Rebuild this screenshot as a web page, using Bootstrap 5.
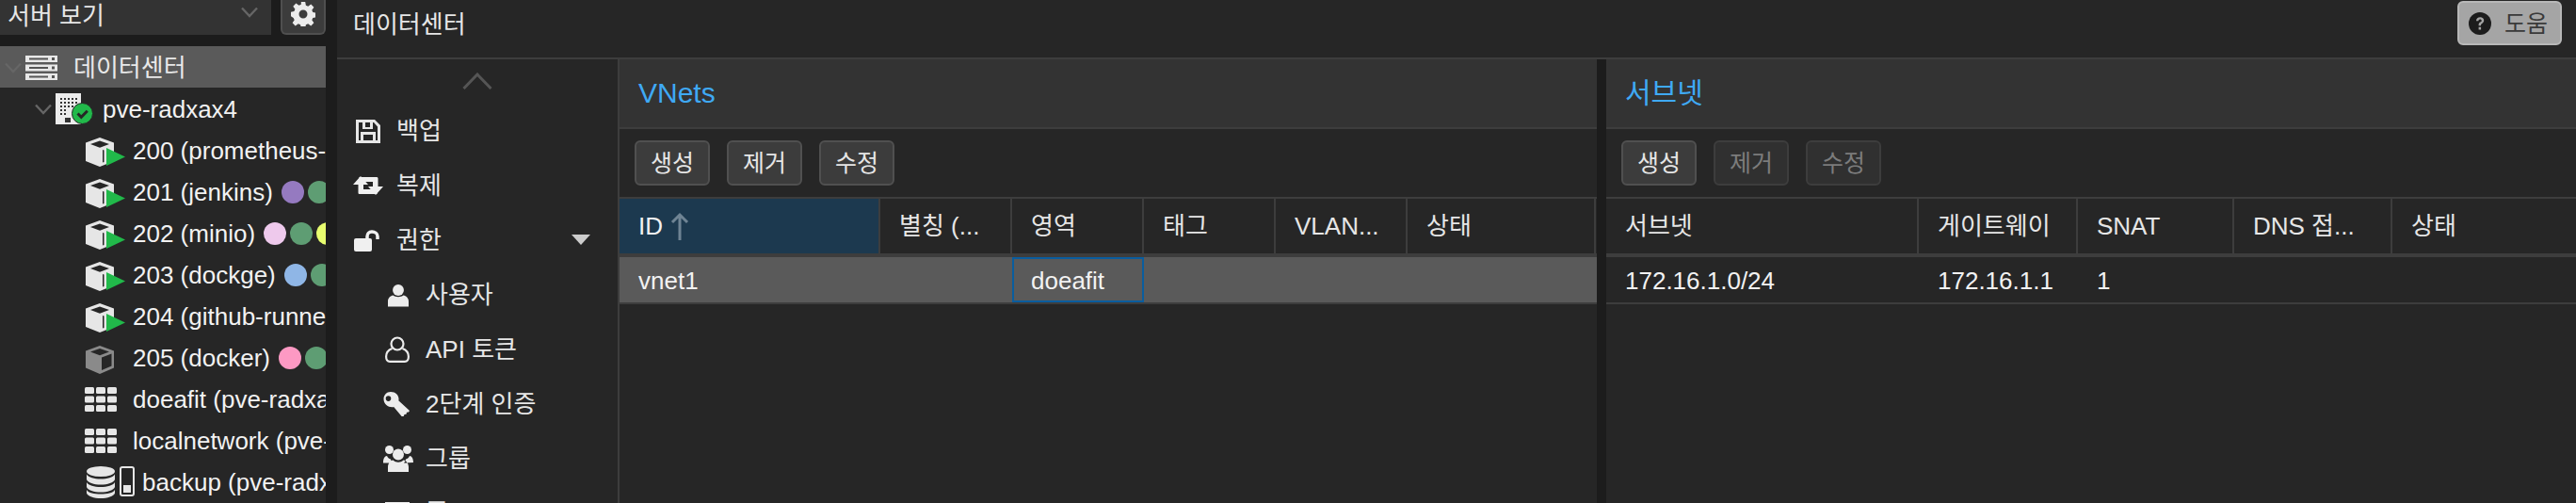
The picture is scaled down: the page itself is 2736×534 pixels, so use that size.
<!DOCTYPE html>
<html lang="ko">
<head>
    <meta charset="UTF-8">
    <title>데이터센터</title>
    <link href="https://cdn.jsdelivr.net/npm/bootstrap@5.3.3/dist/css/bootstrap.min.css" rel="stylesheet">
    <style>
        html, body { height: 534px; overflow: hidden; }
        body {
            background: #1c1c1c;
            color: #f2f2f2;
            font-family: "Liberation Sans", "Noto Sans CJK KR", sans-serif;
            font-size: 26px;
            line-height: 30px;
        }
        svg { flex: none; display: block; }
        .no-min { min-width: 0; min-height: 0; }

        .side-col { width: 346px; margin-right: 12px; flex: none; }
        .view-top { height: 37px; gap: 10px; margin-bottom: 12px; flex: none; }
        .view-select { width: 289px; background: #333; padding: 0 14px 4px 8px; color: #e6e6e6; }
        .gear-btn { width: 48px; background: #3c3c3c; border: 2px solid #4f4f4f; border-top: 0; border-radius: 0 0 6px 6px; padding-bottom: 6px; }
        .tree-box { background: #262626; flex: 1; }
        .tree-row { height: 44px; padding-top: 2px; white-space: nowrap; overflow: hidden; }
        .tree-row.picked { background: #5a5a5a; color: #e8e8e8; }
        .lvl-0 { padding-left: 5px; }
        .lvl-1 { padding-left: 37px; }
        .lvl-2 { padding-left: 90px; }
        .tree-ico { width: 51px; flex: none; }
        .tree-ico .cube-ico { margin-top: 3px; }
        .lvl-0 .tree-ico { margin-left: 4px; }
        .lvl-1 .tree-ico { width: 50px; margin-left: 4px; }
        .db-ico { margin-right: 8px; margin-left: 2px; }
        .tag-dot { width: 24px; height: 24px; border-radius: 50%; flex: none; margin-left: 4px; }
        .tag-first { margin-left: 9px; }
        .dot-purple { background: #957ac0; }
        .dot-green { background: #5e9d73; }
        .dot-lilac { background: #eec9ec; }
        .dot-yellow { background: #e8fd6f; }
        .dot-blue { background: #8fb6e6; }
        .dot-rose { background: #fd99c3; }

        .top-bar { height: 63px; background: #262626; border-bottom: 2px solid #3d3d3d; padding: 0 15px 0 17px; flex: none; }
        .top-title { color: #e6e6e6; padding-bottom: 10px; }
        .help-btn { width: 111px; height: 47px; margin-bottom: 12px; background: #a5a5a5; border: 2px solid #b8b8b8; border-radius: 6px; color: #3a3a3a; font-size: 25px; padding-left: 10px; gap: 14px; }

        .menu-col { width: 300px; background: #262626; border-right: 2px solid #3d3d3d; flex: none; }
        .menu-up { height: 46px; padding-top: 14px; }
        .menu-row { height: 58px; padding-left: 20px; padding-top: 2px; color: #e6e6e6; flex: none; position: relative; }
        .menu-ico { width: 43px; flex: none; }
        .menu-sub { padding-left: 47px; }
        .menu-sub .menu-ico { width: 47px; }
        .nudge-n3 { margin-left: -3px; }
        .nudge-n2 { margin-left: -2px; }
        .nudge-2 { margin-left: 2px; }
        .nudge-4 { margin-left: 4px; }
        .nudge-7 { margin-left: 7px; }
        .menu-caret { position: absolute; left: 249px; top: 24px; width: 0; height: 0; border: 10px solid transparent; border-top: 11px solid #ccc; border-bottom: 0; }

        .grid-panel { background: #262626; }
        .panel-vnet { width: 1038px; flex: none; }
        .panel-split { width: 10px; flex: none; background: #1c1c1c; }
        .panel-sub { flex: 1; min-width: 0; }
        .panel-head { height: 74px; background: #333; border-bottom: 2px solid #3d3d3d; padding: 0 20px; color: #3fa9f5; font-size: 30px; }
        .panel-tools { height: 74px; border-bottom: 2px solid #3d3d3d; padding-left: 16px; gap: 18px; }
        .tool-btn { width: 80px; height: 48px; padding: 0; background: #3c3c3c; border: 2px solid #505050; border-radius: 6px; color: #e6e6e6; font-size: 25px; line-height: 1; }
        .tool-btn:disabled { background: #303030; border-color: #3d3d3d; color: #7c7c7c; opacity: 1; }
        .head-row { height: 62px; border-bottom: 4px solid #3d3d3d; }
        .head-cell { height: 58px; padding: 0 20px; border-right: 2px solid #3d3d3d; flex: none; white-space: nowrap; overflow: hidden; color: #e6e6e6; }
        .head-cell.sorted { background: #1c394f; color: #f2f2f2; }
        .head-cell.plain { border-right: 0; }
        .data-row { height: 50px; border-bottom: 2px solid #3d3d3d; }
        .data-row.picked { background: #5a5a5a; }
        .data-cell { height: 48px; padding: 2px 20px 0; flex: none; white-space: nowrap; }
        .data-cell.focused { border: 2px solid #0a5d9e; padding: 2px 18px 0; }
        .w-277 { width: 277px; }
        .w-140 { width: 140px; }
        .w-200 { width: 200px; }
        .w-332 { width: 332px; }
        .w-169 { width: 169px; }
        .w-166 { width: 166px; }
        .w-168 { width: 168px; }
    </style>
</head>
<body class="d-flex">

<svg class="d-none">
    <symbol id="chev" viewBox="0 0 18 12"><path d="M1 1.500 9 10l8-8.500" fill="none" stroke="#666" stroke-width="2.400"/></symbol>
    <symbol id="cube" viewBox="0 0 43 31">
        <path fill="#e6e6e6" fill-rule="evenodd" d="M16 0 31 5.500V25L16 31 1 25V5.500ZM16 3.500 6 7l10 3.800L26 7ZM19 13v13.500l1.500-.6V13.500Z"/>
        <path fill="#21b94a" d="M23 11 43 20.500 23 30Z"/>
    </symbol>
    <symbol id="cube-off" viewBox="0 0 32 31">
        <path fill="#8a8a8a" d="M16 1 31 6.500V24.500L16 31 1 24.500V6.500Z"/>
        <path fill="#262626" d="M16 4 6 7.500l10 3.800 10-3.800ZM18 13.500V27l10.500-4.500V9.500Z"/>
    </symbol>
    <symbol id="grid" viewBox="0 0 34 26">
        <g fill="#e6e6e6">
            <rect width="10" height="7" rx="1.500"/><rect x="12" width="10" height="7" rx="1.500"/><rect x="24" width="10" height="7" rx="1.500"/>
            <rect y="9.500" width="10" height="7" rx="1.500"/><rect x="12" y="9.500" width="10" height="7" rx="1.500"/><rect x="24" y="9.500" width="10" height="7" rx="1.500"/>
            <rect y="19" width="10" height="7" rx="1.500"/><rect x="12" y="19" width="10" height="7" rx="1.500"/><rect x="24" y="19" width="10" height="7" rx="1.500"/>
        </g>
    </symbol>
</svg>

<aside class="side-col d-flex flex-column">
    <div class="view-top d-flex">
        <div class="view-select d-flex align-items-center justify-content-between">
            <span>서버 보기</span>
            <svg width="18" height="12" class="mb-2"><use href="#chev"/></svg>
        </div>
        <div class="gear-btn d-flex align-items-center justify-content-center">
            <svg width="26" height="26" viewBox="0 0 26 26"><path fill="#ececec" fill-rule="evenodd" d="M10.800 0h4.400l.7 3.700 2.300 1 3.100-2.100 3.100 3.100-2.100 3.100 1 2.300 3.700.7v4.400l-3.700.7-1 2.300 2.100 3.100-3.100 3.100-3.100-2.100-2.300 1-.7 3.700h-4.400l-.7-3.700-2.300-1-3.100 2.100-3.100-3.100 2.100-3.100-1-2.300L-.3 15.200v-4.400l3.700-.7 1-2.300-2.100-3.100 3.100-3.100 3.100 2.100 2.300-1ZM13 8.500a4.500 4.500 0 1 0 0 9 4.500 4.500 0 0 0 0-9Z"/></svg>
        </div>
    </div>
    <div class="tree-box">
        <div class="tree-row picked lvl-0 d-flex align-items-center">
            <svg width="18" height="12"><use href="#chev"/></svg>
            <span class="tree-ico">
                <svg width="34" height="26" viewBox="0 0 34 26">
                    <g fill="#e8e8e8"><rect width="34" height="7"/><rect y="9.500" width="34" height="7"/><rect y="19" width="34" height="7"/></g>
                    <g fill="#555"><rect x="4" y="2.500" width="20" height="2"/><rect x="4" y="12" width="20" height="2"/><rect x="4" y="21.500" width="20" height="2"/><rect x="28" y="2" width="3" height="3"/><rect x="28" y="11.500" width="3" height="3"/><rect x="28" y="21" width="3" height="3"/></g>
                </svg>
            </span>
            <span>데이터센터</span>
        </div>
        <div class="tree-row lvl-1 d-flex align-items-center">
            <svg width="18" height="12"><use href="#chev"/></svg>
            <span class="tree-ico">
                <svg width="40" height="34" viewBox="0 0 40 34">
                    <rect width="27" height="33" fill="#ececec"/>
                    <path d="M5 5h2v2H5zM9 5h2v2H9zM13 5h2v2h-2zM17 5h2v2h-2zM21 5h2v2h-2zM5 9h2v2H5zM9 9h2v2H9zM13 9h2v2h-2zM17 9h2v2h-2zM21 9h2v2h-2zM5 13h2v2H5zM9 13h2v2H9zM13 13h2v2h-2zM17 13h2v2h-2zM5 17h2v2H5zM9 17h2v2H9zM5 21h2v2H5zM9 21h2v2H9zM10 26h6v5h-6z" fill="#333"/>
                    <circle cx="28.500" cy="21.500" r="11" fill="#21b94a" stroke="#262626"/>
                    <path d="M23.500 21.500l3.800 3.800 6.500-6.500" fill="none" stroke="#262626" stroke-width="3"/>
                </svg>
            </span>
            <span>pve-radxax4</span>
        </div>
        <div class="tree-row lvl-2 d-flex align-items-center">
            <span class="tree-ico"><svg class="cube-ico" width="43" height="31"><use href="#cube"/></svg></span>
            <span>200 (prometheus-server)</span>
        </div>
        <div class="tree-row lvl-2 d-flex align-items-center">
            <span class="tree-ico"><svg class="cube-ico" width="43" height="31"><use href="#cube"/></svg></span>
            <span>201 (jenkins)</span><i class="tag-dot tag-first dot-purple"></i><i class="tag-dot dot-green"></i>
        </div>
        <div class="tree-row lvl-2 d-flex align-items-center">
            <span class="tree-ico"><svg class="cube-ico" width="43" height="31"><use href="#cube"/></svg></span>
            <span>202 (minio)</span><i class="tag-dot tag-first dot-lilac"></i><i class="tag-dot dot-green"></i><i class="tag-dot dot-yellow"></i>
        </div>
        <div class="tree-row lvl-2 d-flex align-items-center">
            <span class="tree-ico"><svg class="cube-ico" width="43" height="31"><use href="#cube"/></svg></span>
            <span>203 (dockge)</span><i class="tag-dot tag-first dot-blue"></i><i class="tag-dot dot-green"></i>
        </div>
        <div class="tree-row lvl-2 d-flex align-items-center">
            <span class="tree-ico"><svg class="cube-ico" width="43" height="31"><use href="#cube"/></svg></span>
            <span>204 (github-runner)</span>
        </div>
        <div class="tree-row lvl-2 d-flex align-items-center">
            <span class="tree-ico"><svg class="cube-ico" width="32" height="31"><use href="#cube-off"/></svg></span>
            <span>205 (docker)</span><i class="tag-dot tag-first dot-rose"></i><i class="tag-dot dot-green"></i>
        </div>
        <div class="tree-row lvl-2 d-flex align-items-center">
            <span class="tree-ico"><svg width="34" height="26"><use href="#grid"/></svg></span>
            <span>doeafit (pve-radxax4)</span>
        </div>
        <div class="tree-row lvl-2 d-flex align-items-center">
            <span class="tree-ico"><svg width="34" height="26"><use href="#grid"/></svg></span>
            <span>localnetwork (pve-radxax4)</span>
        </div>
        <div class="tree-row lvl-2 d-flex align-items-center">
            <svg width="51" height="34" viewBox="0 0 51 34" class="db-ico">
                <g fill="#e6e6e6">
                    <ellipse cx="15" cy="5.500" rx="15" ry="5.500"/>
                    <path d="M0 8.500c2 3.500 8 5 15 5s13-1.500 15-5v5.500c-1 3.500-8 5.500-15 5.500S1 17.500 0 14Z"/>
                    <path d="M0 17c2 3.500 8 5 15 5s13-1.500 15-5v5c-1 3.500-8 5.500-15 5.500S1 25.500 0 22Z"/>
                    <path d="M0 25c2 3.500 8 4.500 15 4.500S28 28.500 30 25v3.500c-1 3.500-8 5.500-15 5.500S1 32 0 28.500Z"/>
                </g>
                <rect x="36" y="1" width="14" height="30" rx="2" fill="none" stroke="#e6e6e6" stroke-width="2"/>
                <rect x="39" y="20" width="8" height="8" fill="#e6e6e6"/>
            </svg>
            <span>backup (pve-radxax4)</span>
        </div>
    </div>
</aside>

<main class="flex-grow-1 d-flex flex-column no-min">
    <header class="top-bar d-flex align-items-center justify-content-between">
        <span class="top-title">데이터센터</span>
        <div class="help-btn d-flex align-items-center">
            <svg width="24" height="24" viewBox="0 0 24 24"><circle cx="12" cy="12" r="12" fill="#1c1c1c"/><path d="M8 9.300c0-2.500 1.800-4 4.200-4 2.300 0 4 1.400 4 3.500 0 1.500-.8 2.300-2 3.100-.9.600-1.200 1-1.200 1.900v.5h-2.400v-.8c0-1.400.5-2.100 1.700-2.900.9-.6 1.400-1 1.400-1.700 0-.8-.7-1.400-1.600-1.400-1 0-1.600.7-1.700 1.800ZM10.600 15.800h2.500v2.600h-2.500Z" fill="#a5a5a5"/></svg>
            <span>도움</span>
        </div>
    </header>

    <div class="d-flex flex-grow-1 no-min">
        <nav class="menu-col overflow-hidden">
            <div class="menu-up d-flex justify-content-center">
                <svg width="32" height="18" viewBox="0 0 32 18"><path d="M1.500 17 16 2l14.500 15" fill="none" stroke="#555" stroke-width="3"/></svg>
            </div>
            <div class="menu-row d-flex align-items-center">
                <span class="menu-ico">
                    <svg width="26" height="25" viewBox="0 0 26 25"><path fill="#e6e6e6" fill-rule="evenodd" d="M0 0h20l6 6v19H0ZM3 3v19h2V13h16v9h2V7.500L19 3h-1v7H7V3ZM10 3v5h5V3ZM8 16v6h10v-6Z"/></svg>
                </span>
                <span>백업</span>
            </div>
            <div class="menu-row d-flex align-items-center">
                <span class="menu-ico">
                    <svg width="32" height="20" viewBox="0 0 32 20" class="nudge-n3"><path fill="#f0f0f0" d="M8 0l8 9h-5v5h11l4 5H7c-1 0-1.500-.5-1.500-1.500V9H0ZM6 1h18.500c1.500 0 2 .5 2 1.500V11H32l-8 9-8-9h5V6H10Z"/></svg>
                </span>
                <span>복제</span>
            </div>
            <div class="menu-row d-flex align-items-center">
                <span class="menu-ico">
                    <svg width="28" height="23" viewBox="0 0 28 23" class="nudge-n2"><rect y="9" width="19" height="14" rx="2" fill="#f0f0f0"/><path d="M14 10V7c0-3 2-5 5-5s6 2 6 5v3" fill="none" stroke="#f0f0f0" stroke-width="3.500"/></svg>
                </span>
                <span>권한</span>
                <i class="menu-caret"></i>
            </div>
            <div class="menu-row menu-sub d-flex align-items-center">
                <span class="menu-ico">
                    <svg width="22" height="25" viewBox="0 0 24 26" class="nudge-7"><circle cx="12" cy="7" r="6.500" fill="#ececec"/><path d="M0 26v-6c0-4 3-6.500 6-7 3 2.500 9 2.500 12 0 3 .5 6 3 6 7v6Z" fill="#ececec"/></svg>
                </span>
                <span>사용자</span>
            </div>
            <div class="menu-row menu-sub d-flex align-items-center">
                <span class="menu-ico">
                    <svg width="26" height="28" viewBox="0 0 26 28" class="nudge-4"><g fill="none" stroke="#ececec" stroke-width="2.200"><circle cx="13" cy="8" r="6.500"/><path d="M7.500 13c-4 1.500-6.400 4-6.400 8.500 0 3.500 1.500 5.400 4 5.400h15.800c2.500 0 4-1.900 4-5.400 0-4.500-2.400-7-6.400-8.500"/></g></svg>
                </span>
                <span>API 토큰</span>
            </div>
            <div class="menu-row menu-sub d-flex align-items-center">
                <span class="menu-ico">
                    <svg width="28" height="26" viewBox="0 0 28 26" class="nudge-2"><path fill="#ececec" fill-rule="evenodd" d="M8 0c5 0 8.500 3.500 8.500 7.500 0 .8 0 1.200-.2 1.800L28 20l-1 1.500-2 .2-.5 2-2 .2-.8 2-2 .2-8.500-10c-4.500 1-10.700-2-10.700-8.500C.5 3.500 3.500 0 8 0ZM5.500 4.300a2.800 2.800 0 1 0 0 5.600 2.800 2.800 0 0 0 0-5.600Z"/></svg>
                </span>
                <span>2단계 인증</span>
            </div>
            <div class="menu-row menu-sub d-flex align-items-center">
                <span class="menu-ico">
                    <svg width="32" height="28" viewBox="0 0 32 28" class="nudge-2"><g fill="#ececec"><circle cx="6.500" cy="4.500" r="4.500"/><circle cx="25.500" cy="4.500" r="4.500"/><circle cx="16" cy="9.500" r="6"/><path d="M0 18c0-4 1.500-7 4-7 .8 2 2 3 4 3.500 .5 2 1.500 3.500 2 4H0ZM32 18c0-4-1.500-7-4-7-.8 2-2 3-4 3.500-.5 2-1.500 3.500-2 4ZM5 28v-5c0-4 2.500-7 5.500-7.500 3 3 8 3 11 0 3 .5 5.500 3.500 5.500 7.500v5Z"/></g></svg>
                </span>
                <span>그룹</span>
            </div>
            <div class="menu-row menu-sub d-flex align-items-center">
                <span class="menu-ico">
                    <svg width="26" height="24" viewBox="0 0 26 24" class="nudge-4"><rect width="26" height="24" fill="#ececec"/></svg>
                </span>
                <span>풀</span>
            </div>
        </nav>

        <section class="grid-panel panel-vnet">
            <div class="panel-head d-flex align-items-center">VNets</div>
            <div class="panel-tools d-flex align-items-center">
                <button class="btn tool-btn" type="button">생성</button>
                <button class="btn tool-btn" type="button">제거</button>
                <button class="btn tool-btn" type="button">수정</button>
            </div>
            <div class="head-row d-flex">
                <div class="head-cell sorted w-277 d-flex align-items-center">ID
                    <svg width="20" height="31" viewBox="0 0 20 31" class="ms-2"><path d="M10 30V3M2 11l8-8 8 8" fill="none" stroke="#6f8494" stroke-width="3"/></svg>
                </div>
                <div class="head-cell w-140 d-flex align-items-center">별칭 (...</div>
                <div class="head-cell w-140 d-flex align-items-center">영역</div>
                <div class="head-cell w-140 d-flex align-items-center">태그</div>
                <div class="head-cell w-140 d-flex align-items-center">VLAN...</div>
                <div class="head-cell w-200 d-flex align-items-center">상태</div>
            </div>
            <div class="data-row picked d-flex">
                <div class="data-cell w-277 d-flex align-items-center">vnet1</div>
                <div class="data-cell w-140"></div>
                <div class="data-cell focused w-140 d-flex align-items-center">doeafit</div>
            </div>
        </section>

        <div class="panel-split"></div>

        <section class="grid-panel panel-sub">
            <div class="panel-head d-flex align-items-center">서브넷</div>
            <div class="panel-tools d-flex align-items-center">
                <button class="btn tool-btn" type="button">생성</button>
                <button class="btn tool-btn" type="button" disabled>제거</button>
                <button class="btn tool-btn" type="button" disabled>수정</button>
            </div>
            <div class="head-row d-flex">
                <div class="head-cell w-332 d-flex align-items-center">서브넷</div>
                <div class="head-cell w-169 d-flex align-items-center">게이트웨이</div>
                <div class="head-cell w-166 d-flex align-items-center">SNAT</div>
                <div class="head-cell w-168 d-flex align-items-center">DNS 접...</div>
                <div class="head-cell plain d-flex align-items-center">상태</div>
            </div>
            <div class="data-row d-flex">
                <div class="data-cell w-332 d-flex align-items-center">172.16.1.0/24</div>
                <div class="data-cell w-169 d-flex align-items-center">172.16.1.1</div>
                <div class="data-cell w-166 d-flex align-items-center">1</div>
            </div>
        </section>
    </div>
</main>

</body>
</html>
